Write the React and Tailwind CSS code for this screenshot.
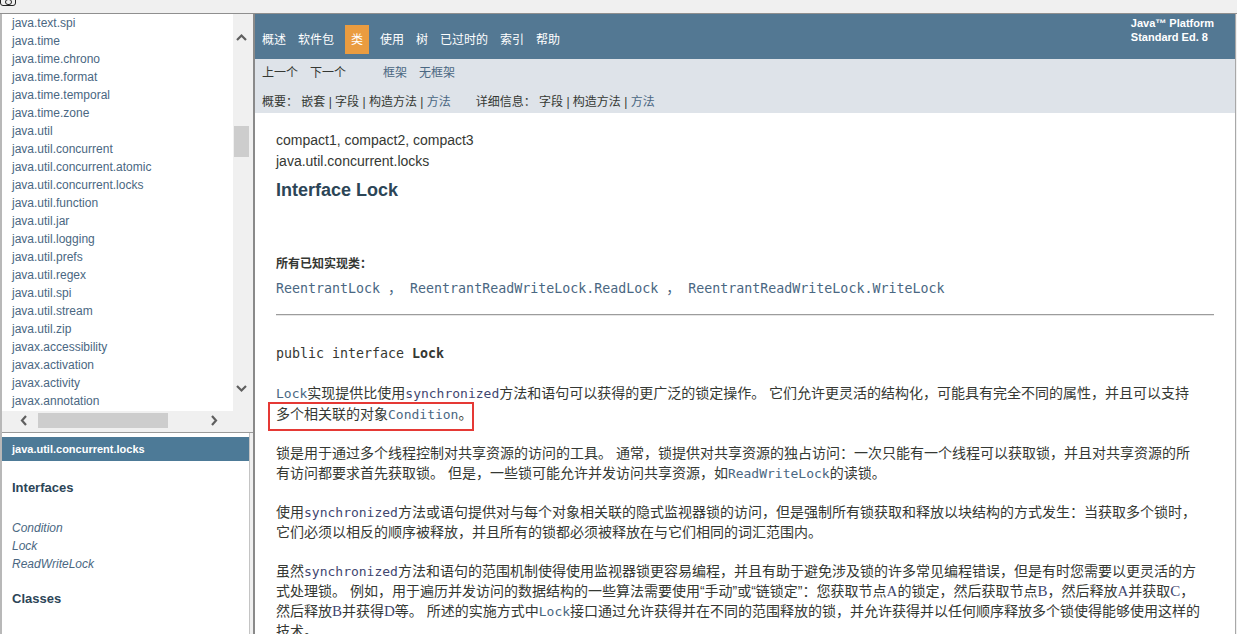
const packages = [
  "java.text.spi",
  "java.time",
  "java.time.chrono",
  "java.time.format",
  "java.time.temporal",
  "java.time.zone",
  "java.util",
  "java.util.concurrent",
  "java.util.concurrent.atomic",
  "java.util.concurrent.locks",
  "java.util.function",
  "java.util.jar",
  "java.util.logging",
  "java.util.prefs",
  "java.util.regex",
  "java.util.spi",
  "java.util.stream",
  "java.util.zip",
  "javax.accessibility",
  "javax.activation",
  "javax.activity",
  "javax.annotation",
];

const navItems = ["概述", "软件包", "类", "使用", "树", "已过时的", "索引", "帮助"];

function Arrow({ dir }) {
  const pts = {
    up: "1,7 5.5,2.5 10,7",
    down: "1,2 5.5,6.5 10,2",
    left: "6,1 2,5.5 6,10",
    right: "2,1 6,5.5 2,10",
  }[dir];
  const vertical = dir === "up" || dir === "down";
  return (
    <svg
      width={vertical ? 11 : 8}
      height={vertical ? 9 : 11}
      viewBox={vertical ? "0 0 11 9" : "0 0 8 11"}
      className="block"
    >
      <polyline points={pts} fill="none" stroke="#5f5f5f" strokeWidth="2.2" />
    </svg>
  );
}

const mono = "font-['DejaVu_Sans_Mono','Liberation_Mono',monospace]";

function Code({ children }) {
  return <span className={`${mono} text-[13px] text-[#3f4670]`}>{children}</span>;
}

function CodeLink({ children }) {
  return <span className={`${mono} text-[13px] text-[#4a6782]`}>{children}</span>;
}

function Serif({ children }) {
  return <span className="font-['Liberation_Serif',serif] text-[15px] text-[#3f4670]">{children}</span>;
}

// one wrapped line of the description text, fixed height so mixed fonts don't push it
function Line({ children, h = "h-[20px] leading-[20px]", className = "" }) {
  return <div className={`${h} whitespace-nowrap ${className}`}>{children}</div>;
}

export default function App() {
  return (
    <div className="w-[1237px] h-[634px] overflow-hidden bg-[#f0f0f0] flex flex-col font-['Liberation_Sans','Noto_Sans_CJK_SC',sans-serif] text-[#353833]">
      {/* window strip */}
      <div className="h-[14px] shrink-0 border-b border-[#8f8f8f] relative">
        <div className="absolute left-0 top-[-3px] w-[16px] h-[9px] border-[1.5px] border-[#222] rounded-[3px] flex items-center justify-center">
          <div className="w-[7px] h-[6px] border-[1.5px] border-[#222] rounded-full" />
        </div>
      </div>

      <div className="flex flex-1 min-h-0">
        {/* Left frames */}
        <div className="w-[253px] shrink-0 flex flex-col border-l-2 border-[#b8b8b8]">
          {/* package list frame */}
          <div className="h-[416px] shrink-0 flex flex-col">
            <div className="flex h-[397px]">
              <div className="w-[231px] bg-white overflow-hidden pl-[10px]">
                {packages.map((p) => (
                  <div key={p} className="text-[12px] leading-[18px] text-[#4a6782] whitespace-nowrap">
                    {p}
                  </div>
                ))}
              </div>
              <div className="w-[17px] bg-[#f0f0f0] flex flex-col items-center pt-[19px] pb-[18px]">
                <Arrow dir="up" />
                <div className="mt-[84px] w-[15px] h-[31px] bg-[#cdcdcd]" />
                <div className="mt-auto">
                  <Arrow dir="down" />
                </div>
              </div>
              <div className="w-[3px] bg-[#f0f0f0]" />
            </div>
            <div className="h-[19px] flex items-center bg-[#f0f0f0]">
              <div className="w-[231px] flex items-center pl-[18px]">
                <Arrow dir="left" />
                <div className="ml-[10px] w-[130px] h-[15px] bg-[#cdcdcd]" />
                <div className="ml-[42px]">
                  <Arrow dir="right" />
                </div>
              </div>
            </div>
          </div>
          <div className="h-[3px] shrink-0 border-b border-[#9a9a9a]" />

          {/* package frame */}
          <div className="flex-1 bg-white border-r border-[#c4c4c4] mr-[3px] pt-[4px]">
            <div className="h-[24px] bg-[#4d7a97] text-white font-bold text-[11px] leading-[24px] pl-[10px]">
              java.util.concurrent.locks
            </div>
            <div className="pl-[10px]">
              <div className="mt-[19px] text-[13px] leading-[16px] font-bold text-[#2c4557]">Interfaces</div>
              <div className="mt-[23px]">
                {["Condition", "Lock", "ReadWriteLock"].map((n) => (
                  <div key={n} className="text-[12px] leading-[18px] italic text-[#4a6782]">
                    {n}
                  </div>
                ))}
              </div>
              <div className="mt-[18px] text-[13px] leading-[16px] font-bold text-[#2c4557]">Classes</div>
            </div>
          </div>
        </div>

        {/* frame separator */}
        <div className="w-[2px] shrink-0 bg-[#8a8a8a]" />

        {/* Main frame */}
        <div className="w-[980px] shrink-0 flex flex-col bg-white">
          {/* top nav */}
          <div className="h-[45px] shrink-0 bg-[#537893] flex pt-[11px] pl-[1px]">
            <div className="flex h-[29px] text-[12px] text-white">
              {navItems.map((item) =>
                item === "类" ? (
                  <div key={item} className="mx-[5px] px-[6px] bg-[#ea9c40] flex items-center">
                    {item}
                  </div>
                ) : (
                  <div key={item} className="px-[6px] flex items-center">
                    {item}
                  </div>
                )
              )}
            </div>
            <div className="ml-auto -mt-[9px] pr-[21px] text-[11px] leading-[14px] font-bold text-white">
              <div>Java™ Platform</div>
              <div>Standard Ed. 8</div>
            </div>
          </div>

          {/* sub nav */}
          <div className="h-[54px] shrink-0 bg-[#dee3e9] text-[12px] leading-[16px] pl-[1px] pt-[6px]">
            <div className="flex">
              <span className="px-[6px]">上一个</span>
              <span className="px-[6px]">下一个</span>
              <span className="ml-[25px] px-[6px] text-[#4a6782]">框架</span>
              <span className="px-[6px] text-[#4a6782]">无框架</span>
            </div>
            <div className="flex mt-[13px] pl-[6px] whitespace-pre">
              <span>
                概要： 嵌套 | 字段 | 构造方法 | <span className="text-[#4a6782]">方法</span>
              </span>
              <span className="ml-[25px]">
                详细信息： 字段 | 构造方法 | <span className="text-[#4a6782]">方法</span>
              </span>
            </div>
          </div>

          {/* content */}
          <div className="flex-1 px-[21px] pt-[17px] overflow-hidden">
            <div className="text-[14px] leading-[20px] whitespace-nowrap">compact1, compact2, compact3</div>
            <div className="mt-[1px] text-[14px] leading-[20px] whitespace-nowrap">java.util.concurrent.locks</div>
            <div className="mt-[7px] text-[18px] leading-[24px] font-bold text-[#2c4557]">Interface Lock</div>

            <div className="mt-[54px] text-[12px] leading-[16px] font-bold">所有已知实现类：</div>
            <div className="mt-[7px] h-[18px] leading-[18px] whitespace-pre text-[#4a6782]">
              <span className={`${mono} text-[13.3px]`}>ReentrantLock </span>
              <span className="text-[14px]">，</span>
              <span className={`${mono} text-[13.3px]`}> ReentrantReadWriteLock.ReadLock </span>
              <span className="text-[14px]">，</span>
              <span className={`${mono} text-[13.3px]`}> ReentrantReadWriteLock.WriteLock</span>
            </div>

            <div className="mt-[17px] h-[2px] border-t border-[#9c9c9c] border-b border-b-[#e6e6e6]" />

            <div className={`mt-[28px] h-[20px] ${mono} text-[13.3px] leading-[20px] whitespace-pre`}>
              public interface <span className="font-bold">Lock</span>
            </div>

            <div className="mt-[19px] text-[14px]">
              <Line h="h-[21px] leading-[21px]">
                <CodeLink>Lock</CodeLink>实现提供比使用<Code>synchronized</Code>方法和语句可以获得的更广泛的锁定操作。 它们允许更灵活的结构化，可能具有完全不同的属性，并且可以支持
              </Line>
              <Line h="h-[21px] leading-[21px]" className="relative">
                多个相关联的对象<CodeLink>Condition</CodeLink>。
                <div className="absolute left-[-8px] top-[-2px] w-[206px] h-[29px] border-2 border-[#e53935]" />
              </Line>
            </div>

            <div className="mt-[18px] text-[14px]">
              <Line>锁是用于通过多个线程控制对共享资源的访问的工具。 通常，锁提供对共享资源的独占访问：一次只能有一个线程可以获取锁，并且对共享资源的所</Line>
              <Line>
                有访问都要求首先获取锁。 但是，一些锁可能允许并发访问共享资源，如<CodeLink>ReadWriteLock</CodeLink>的读锁。
              </Line>
            </div>

            <div className="mt-[19px] text-[14px]">
              <Line>
                使用<Code>synchronized</Code>方法或语句提供对与每个对象相关联的隐式监视器锁的访问，但是强制所有锁获取和释放以块结构的方式发生：当获取多个锁时，
              </Line>
              <Line>它们必须以相反的顺序被释放，并且所有的锁都必须被释放在与它们相同的词汇范围内。</Line>
            </div>

            <div className="mt-[19px] text-[14px]">
              <Line>
                虽然<Code>synchronized</Code>方法和语句的范围机制使得使用监视器锁更容易编程，并且有助于避免涉及锁的许多常见编程错误，但是有时您需要以更灵活的方
              </Line>
              <Line>
                式处理锁。 例如，用于遍历并发访问的数据结构的一些算法需要使用“手动”或“链锁定”：您获取节点<Serif>A</Serif>的锁定，然后获取节点<Serif>B</Serif>，然后释放<Serif>A</Serif>并获取<Serif>C</Serif>，
              </Line>
              <Line>
                然后释放<Serif>B</Serif>并获得<Serif>D</Serif>等。 所述的实施方式中<CodeLink>Lock</CodeLink>接口通过允许获得并在不同的范围释放的锁，并允许获得并以任何顺序释放多个锁使得能够使用这样的
              </Line>
              <Line>技术。</Line>
            </div>
          </div>
        </div>

        {/* main frame edge */}
        <div className="flex-1 border-l border-[#a8a8a8] bg-[#f0f0f0]" />
      </div>
    </div>
  );
}
